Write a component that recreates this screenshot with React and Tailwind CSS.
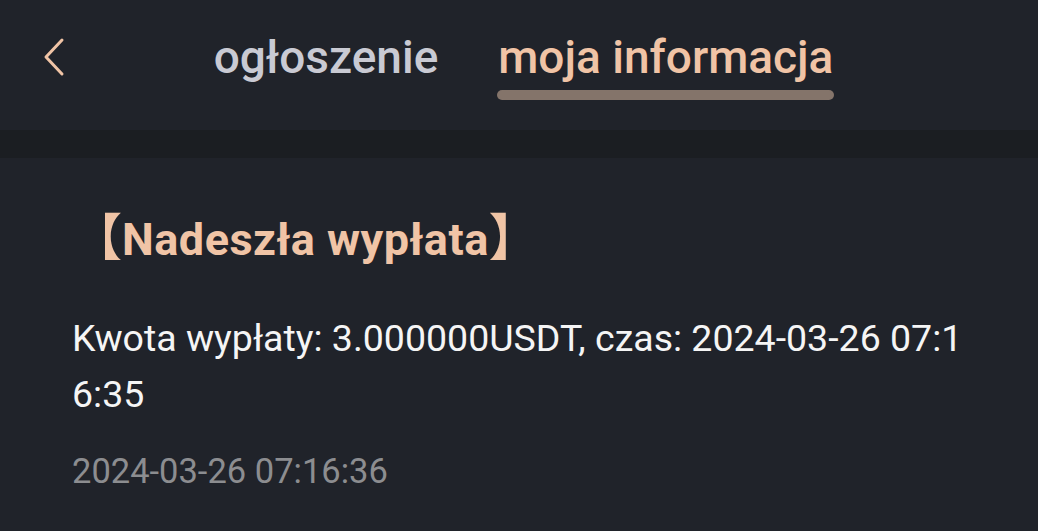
export default function App() {
  const font = { fontFamily: "Roboto, 'Noto Sans CJK SC', sans-serif" };
  return (
    <div className="w-[1038px] h-[531px] overflow-hidden bg-[#20232a]" style={font}>
      {/* nagłówek z zakładkami */}
      <div className="relative h-[130px] bg-[#20232a]">
        <button className="absolute left-[40px] top-[37px] w-[28px] h-[40px] flex items-center justify-center">
          <svg viewBox="0 0 24 40" className="w-[24px] h-[40px]" fill="none" stroke="#f0c4a6" strokeWidth="3" strokeLinecap="round" strokeLinejoin="round">
            <path d="M20 3 L4 20 L20 37" />
          </svg>
        </button>
        <div className="flex justify-center gap-[59px] pl-[10px]">
          <div className="pt-[34px] flex flex-col items-center">
            <span className="text-[46px] leading-none font-medium text-[#c9cad3]">ogłoszenie</span>
          </div>
          <div className="pt-[34px] flex flex-col items-center">
            <span className="text-[46px] leading-none font-medium text-[#f0c4a6]">moja informacja</span>
            <div className="mt-[10px] h-[10px] w-[337px] rounded-full bg-[#84746a]" />
          </div>
        </div>
      </div>
      <div className="h-[28px] bg-[#1b1e22]" />

      {/* wiadomość */}
      <div className="px-[72px]">
        <div className="mt-[55px] h-[50px] text-[45px] leading-[50px] font-bold tracking-[0.5px] text-[#f0c4a6] whitespace-nowrap">
          <span className="text-[50px] leading-none tracking-normal">【</span>
          Nadeszła wypłata
          <span className="text-[50px] leading-none tracking-normal">】</span>
        </div>
        <p className="mt-[47px] text-[37.5px] leading-[56px] text-[#f5f5f5] break-all">
          Kwota wypłaty: 3.000000USDT, czas: 2024-03-26 07:16:35
        </p>
        <div className="mt-[32px] text-[34.5px] leading-none text-[#8c8d90]">2024-03-26 07:16:36</div>
      </div>
    </div>
  );
}
